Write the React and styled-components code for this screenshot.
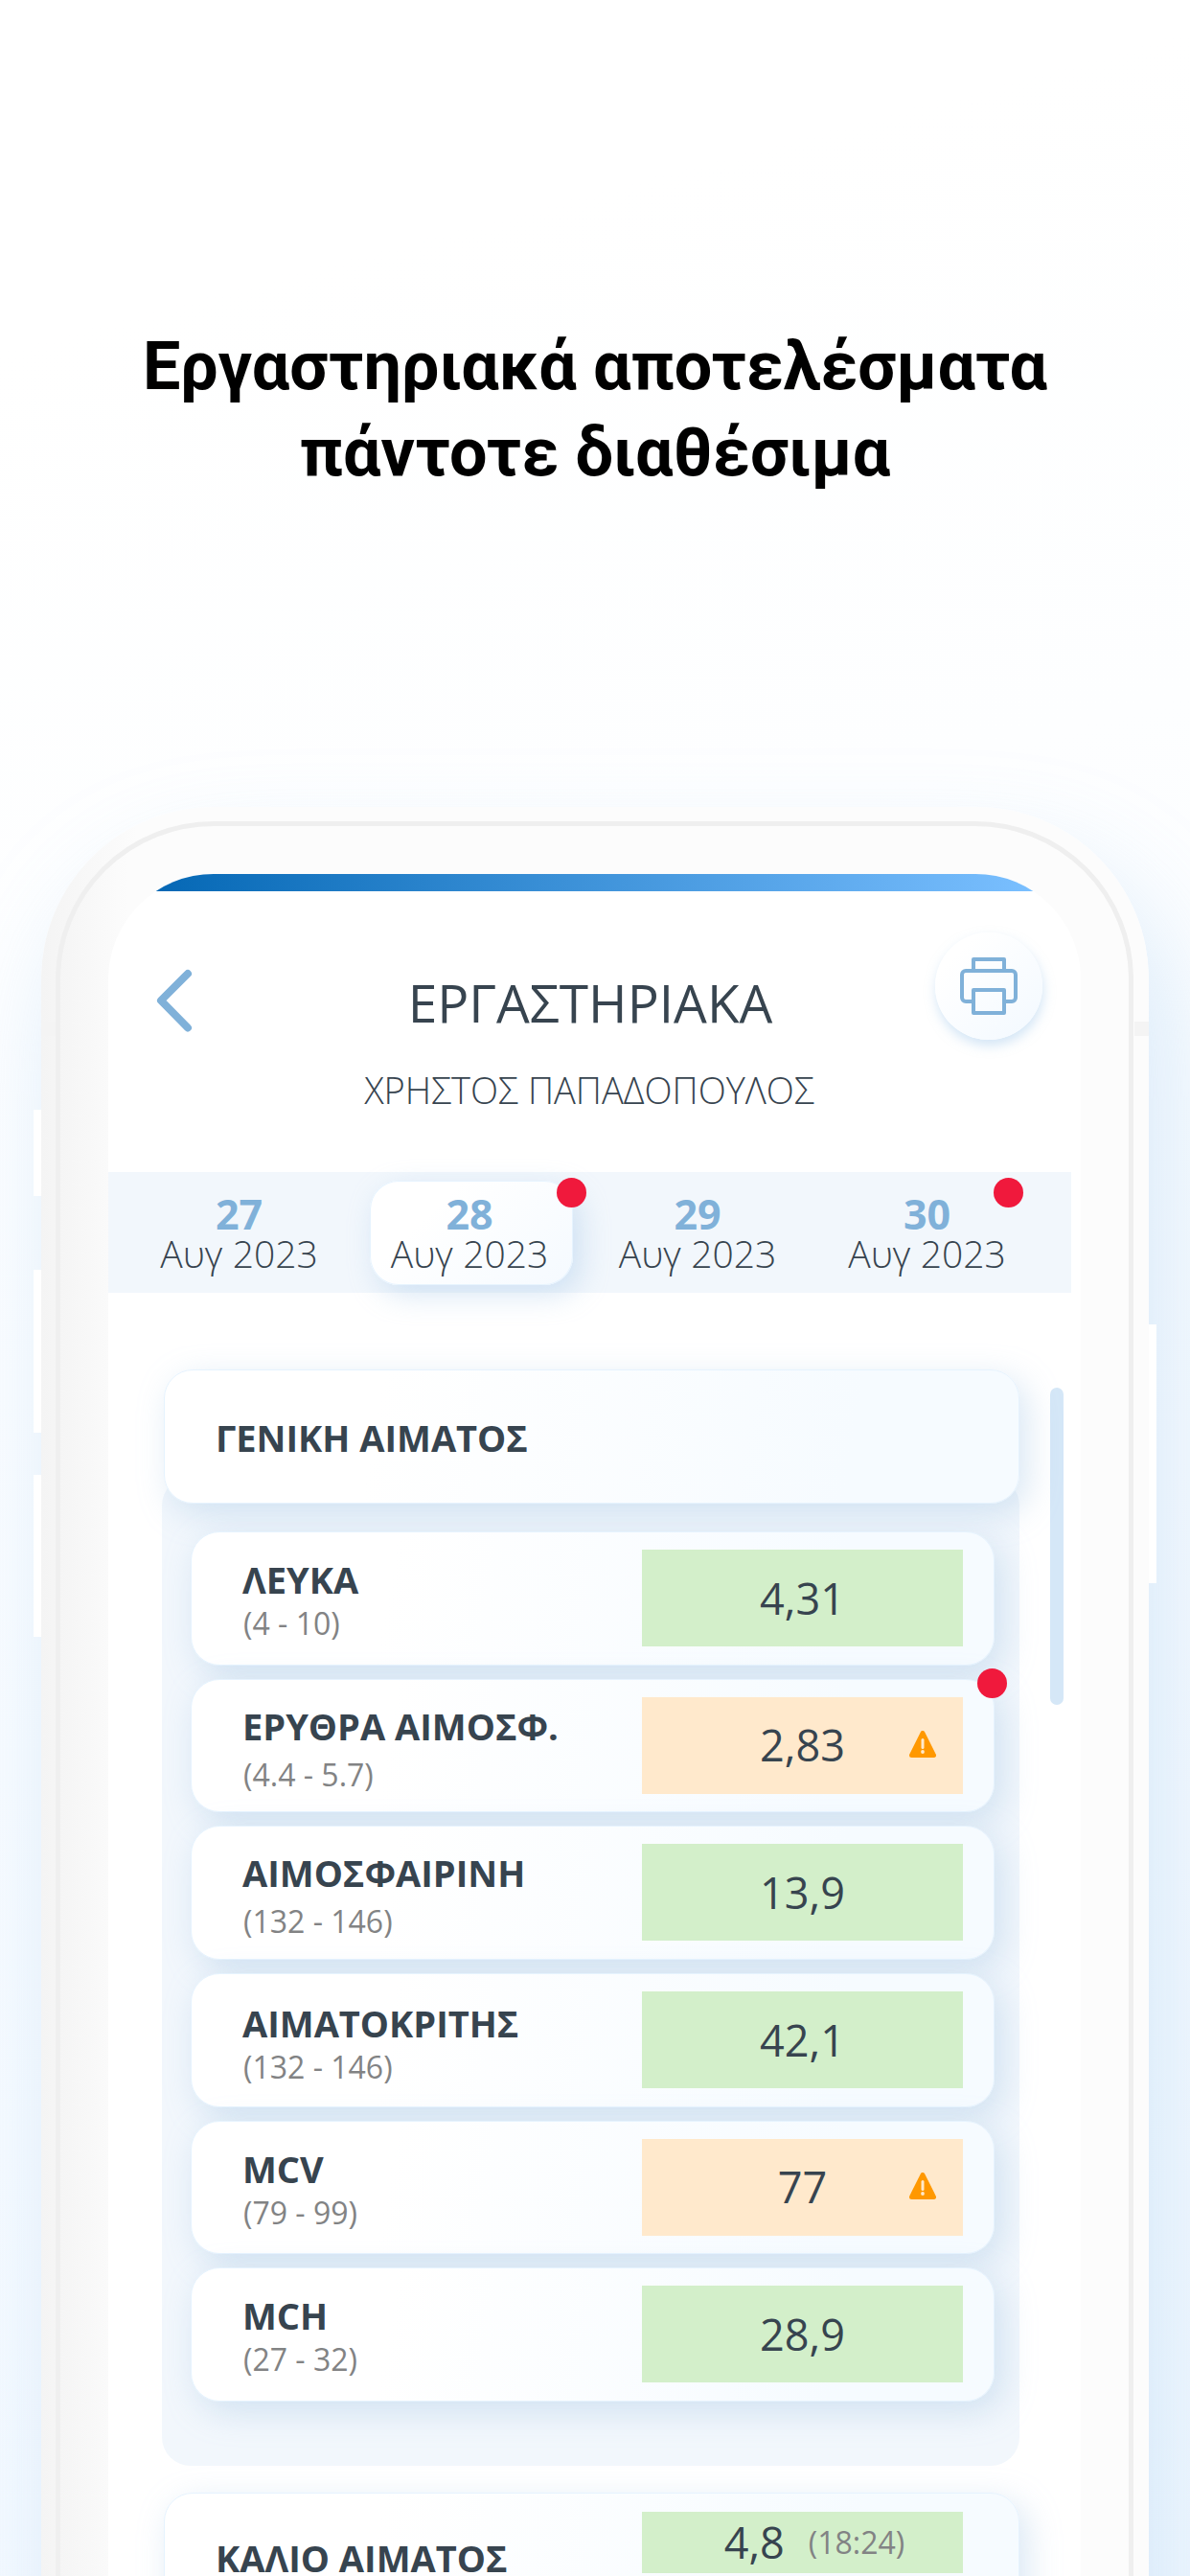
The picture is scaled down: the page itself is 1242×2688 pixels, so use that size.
import React from 'react';
import styled, { createGlobalStyle } from 'styled-components';


const GlobalStyle = createGlobalStyle`
  * {
    box-sizing: border-box;
  }

  body {
    margin: 0;
    font-family: 'Open Sans', 'Noto Sans', sans-serif;
    color: #37444f;
  }
`;

const Page = styled.div`
  width: 1242px;
  height: 2688px;
  overflow: hidden;
  padding-top: 337px;
  background: linear-gradient(165deg, #ffffff 12%, #fdfeff 35%, #f3f9ff 100%);
`;

const Headline = styled.h1`
  margin: 0 0 325px;
  height: 180px;
  font-family: Roboto, sans-serif;
  font-size: 70px;
  font-weight: 700;
  line-height: 90px;
  text-align: center;
  color: #000;
`;

const Phone = styled.div`
  position: relative;
  width: 1156px;
  height: 2100px;
  margin-left: 43px;
  padding: 15px 16px 15px 15px;
  border-radius: 180px;
  background: linear-gradient(90deg, #f4f4f4 0, #fcfcfc 100px);
  box-shadow: 20px 60px 110px rgba(165, 205, 240, 0.4);
`;

const SideButton = styled.span`
  position: absolute;
  top: ${(props) => props.$top}px;
  ${(props) => (props.$right ? 'right' : 'left')}: -8px;
  width: 8px;
  height: ${(props) => props.$height}px;
  background: #fff;
`;

const Antenna = styled.span`
  position: absolute;
  top: 224px;
  ${(props) => (props.$right ? 'right' : 'left')}: 0;
  width: 15px;
  height: 15px;
  background: #f4f4f4;
`;

const Bezel = styled.div`
  height: 2070px;
  padding: 50px;
  border: 5px solid #efefef;
  border-radius: 165px;
  background: linear-gradient(90deg, #f5f5f5 0, #fcfcfc 70px);
`;

const Screen = styled.div`
  height: 1960px;
  overflow: hidden;
  border-radius: 110px;
  background: #fff;
`;

const StatusBar = styled.div`
  height: 18px;
  background: linear-gradient(90deg, #0568b5 5%, #7abfff 95%);
`;

const Header = styled.header`
  display: grid;
  grid-template-columns: 139px 728px 148px;
  height: 293px;
`;

const BackIcon = styled.svg`
  width: 40px;
  height: 70px;
  margin: 79px 0 0 49px;
`;

const Titles = styled.div`
  padding-top: 86px;
  text-align: center;
`;

const Title = styled.h2`
  margin: 0;
  font-size: 55px;
  font-weight: 400;
  line-height: 60px;
`;

const Patient = styled.p`
  margin: 36px 0 0 -2px;
  font-size: 38px;
  font-weight: 300;
  line-height: 50px;
`;

const PrintButton = styled.button`
  display: flex;
  align-items: center;
  justify-content: center;
  width: 112px;
  height: 112px;
  margin: 43px 0 0 -4px;
  padding: 0;
  border: none;
  border-radius: 50%;
  background: linear-gradient(135deg, #ffffff 20%, #f5faff 85%);
  box-shadow: 1px 6px 12px rgba(170, 205, 238, 0.5);
`;

const Days = styled.nav`
  display: grid;
  grid-template-columns: 273px 212px 260px 219px;
  width: 1005px;
  height: 126px;
  padding-top: 9px;
  background: #f2f7fc;
`;

const Day = styled.div`
  position: relative;
  height: 109px;
  padding: 13px ${(props) => (props.$active ? 4 : 0)}px 0 0;
  text-align: center;
  ${(props) =>
    props.$active &&
    `
    border-radius: 30px;
    background: linear-gradient(135deg, #ffffff 30%, #f5faff 100%);
    box-shadow: 8px 10px 30px rgba(160, 195, 230, 0.42), inset 0 0 0 1px #e6f3fe;
  `}
`;

const DayNumber = styled.strong`
  display: block;
  font-size: 43px;
  font-weight: 700;
  line-height: 43px;
  color: #80b1d9;
`;

const DayMonth = styled.span`
  display: block;
  font-size: 39px;
  font-weight: 300;
  line-height: 39px;
`;

const Dot = styled.span`
  position: absolute;
  top: ${(props) => props.$top}px;
  right: ${(props) => props.$right}px;
  width: 31px;
  height: 31px;
  border-radius: 50%;
  background: #f0193c;
`;

const Content = styled.main`
  display: flex;
  gap: 32px;
  padding: 80px 0 0 56px;
`;

const Results = styled.div`
  width: 895px;
`;

const Scrollbar = styled.div`
  width: 14px;
  height: 331px;
  margin-top: 19px;
  border-radius: 7px;
  background: #d5e7f7;
`;

const Card = styled.div`
  position: relative;
  display: flex;
  justify-content: space-between;
  border: 1px solid #e6f3fe;
  border-radius: 30px;
  background: linear-gradient(100deg, #ffffff 25%, #f6fbff 80%);
  box-shadow: 8px 10px 34px rgba(155, 193, 226, 0.38);
`;

const GroupHeader = styled(Card)`
  height: 140px;
  margin-left: 2px;
  padding: 19px 58px 0 53px;
`;

const GroupName = styled.h3`
  margin: ${(props) => props.$top}px 0 0;
  font-size: 38px;
  font-weight: 700;
  line-height: 38px;
`;

const Panel = styled.section`
  display: flex;
  flex-direction: column;
  gap: 14px;
  height: 1032px;
  margin: -28px 0 28px;
  padding: 57px 26px 0 30px;
  border-radius: 30px;
  background: #f2f7fc;
`;

const Test = styled(Card)`
  height: 139.7px;
  padding: 18px 32px 0 53px;
`;

const TestName = styled.h4`
  margin: ${(props) => 6 + (props.$shift || 0)}px 0 0;
  font-size: 38px;
  font-weight: 700;
  line-height: 50px;
`;

const TestRange = styled.p`
  margin: ${(props) => (props.$loose ? 6 : 1)}px 0 0 1px;
  font-size: 32px;
  line-height: 40px;
  color: #828384;
`;

const Result = styled.div`
  position: relative;
  display: flex;
  align-items: center;
  justify-content: center;
  gap: 25px;
  width: 335px;
  height: ${(props) => props.$height || 101}px;
  padding-left: ${(props) => props.$indent || 0}px;
  background: ${(props) => (props.$warning ? '#ffe9cc' : '#d3efca')};
  font-size: 45px;
  line-height: 60px;
`;

const Time = styled.small`
  font-size: 32px;
  color: #828384;
`;

const WarningIcon = styled.svg`
  position: absolute;
  top: 35px;
  right: 28px;
  width: 28px;
  height: 28px;
`;

const days = [
  { day: 27 },
  { day: 28, active: true, dot: { top: -3, right: -14 } },
  { day: 29 },
  { day: 30, dot: { top: -3, right: 9 } },
];

const tests = [
  { name: 'ΛΕΥΚΑ', range: '(4 - 10)', value: '4,31' },
  { name: 'ΕΡΥΘΡΑ ΑΙΜΟΣΦ.', range: '(4.4 - 5.7)', value: '2,83', warning: true, loose: true, shift: -1, dot: true },
  { name: 'ΑΙΜΟΣΦΑΙΡΙΝΗ', range: '(132 - 146)', value: '13,9', loose: true, shift: -1 },
  { name: 'ΑΙΜΑΤΟΚΡΙΤΗΣ', range: '(132 - 146)', value: '42,1', shift: 2 },
  { name: 'MCV', range: '(79 - 99)', value: '77', warning: true },
  { name: 'MCH', range: '(27 - 32)', value: '28,9' },
];

function Printer() {
  return (
    <svg width="60" height="60" viewBox="0 0 60 60" fill="none" stroke="#80b1d9" strokeWidth="4">
      <path d="M14 14V2h32v12" strokeLinejoin="round" />
      <path d="M14 46H6a4 4 0 0 1-4-4V18a4 4 0 0 1 4-4h48a4 4 0 0 1 4 4v24a4 4 0 0 1-4 4h-8" />
      <rect x="14" y="34" width="32" height="24" strokeLinejoin="round" />
    </svg>
  );
}

function Warning() {
  return (
    <WarningIcon viewBox="0 0 28 28">
      <path d="M14 2.5L25.5 25.5H2.5Z" fill="#ff9800" stroke="#ff9800" strokeWidth="5" strokeLinejoin="round" />
      <path d="M14 9.5v8" stroke="#ffe9cc" strokeWidth="3" strokeLinecap="round" />
      <circle cx="14" cy="22" r="1.9" fill="#ffe9cc" />
    </WarningIcon>
  );
}

function App() {
  return (
    <>
      <GlobalStyle />
      <Page>
        <Headline>
          Εργαστηριακά αποτελέσματα
          <br />
          πάντοτε διαθέσιμα
        </Headline>

        <Phone>
          <SideButton $top={316} $height={90} />
          <SideButton $top={483} $height={170} />
          <SideButton $top={697} $height={169} />
          <SideButton $top={540} $height={270} $right />
          <Antenna />
          <Antenna $right />

          <Bezel>
            <Screen>
              <StatusBar />
              <Header>
                <BackIcon viewBox="0 0 40 70" fill="none">
                  <path
                    d="M34 7L6 35l28 28.5"
                    stroke="#80b1d9"
                    strokeWidth="8"
                    strokeLinecap="round"
                    strokeLinejoin="round"
                  />
                </BackIcon>
                <Titles>
                  <Title>ΕΡΓΑΣΤΗΡΙΑΚΑ</Title>
                  <Patient>ΧΡΗΣΤΟΣ ΠΑΠΑΔΟΠΟΥΛΟΣ</Patient>
                </Titles>
                <PrintButton>
                  <Printer />
                </PrintButton>
              </Header>

              <Days>
                {days.map((d) => (
                  <Day key={d.day} $active={d.active}>
                    <DayNumber>{d.day}</DayNumber>
                    <DayMonth>Αυγ 2023</DayMonth>
                    {d.dot && <Dot $top={d.dot.top} $right={d.dot.right} />}
                  </Day>
                ))}
              </Days>

              <Content>
                <Results>
                  <GroupHeader>
                    <GroupName $top={32}>ΓΕΝΙΚΗ ΑΙΜΑΤΟΣ</GroupName>
                  </GroupHeader>
                  <Panel>
                    {tests.map((test) => (
                      <Test key={test.name}>
                        <div>
                          <TestName $shift={test.shift}>{test.name}</TestName>
                          <TestRange $loose={test.loose}>{test.range}</TestRange>
                        </div>
                        <Result $warning={test.warning}>
                          {test.value}
                          {test.warning && <Warning />}
                        </Result>
                        {test.dot && <Dot $top={-12} $right={-14} />}
                      </Test>
                    ))}
                  </Panel>

                  <GroupHeader>
                    <GroupName $top={29}>ΚΑΛΙΟ ΑΙΜΑΤΟΣ</GroupName>
                    <Result $height={64} $indent={25}>
                      4,8 <Time>(18:24)</Time>
                    </Result>
                  </GroupHeader>
                </Results>
                <Scrollbar />
              </Content>
            </Screen>
          </Bezel>
        </Phone>
      </Page>
    </>
  );
}

export default App;
